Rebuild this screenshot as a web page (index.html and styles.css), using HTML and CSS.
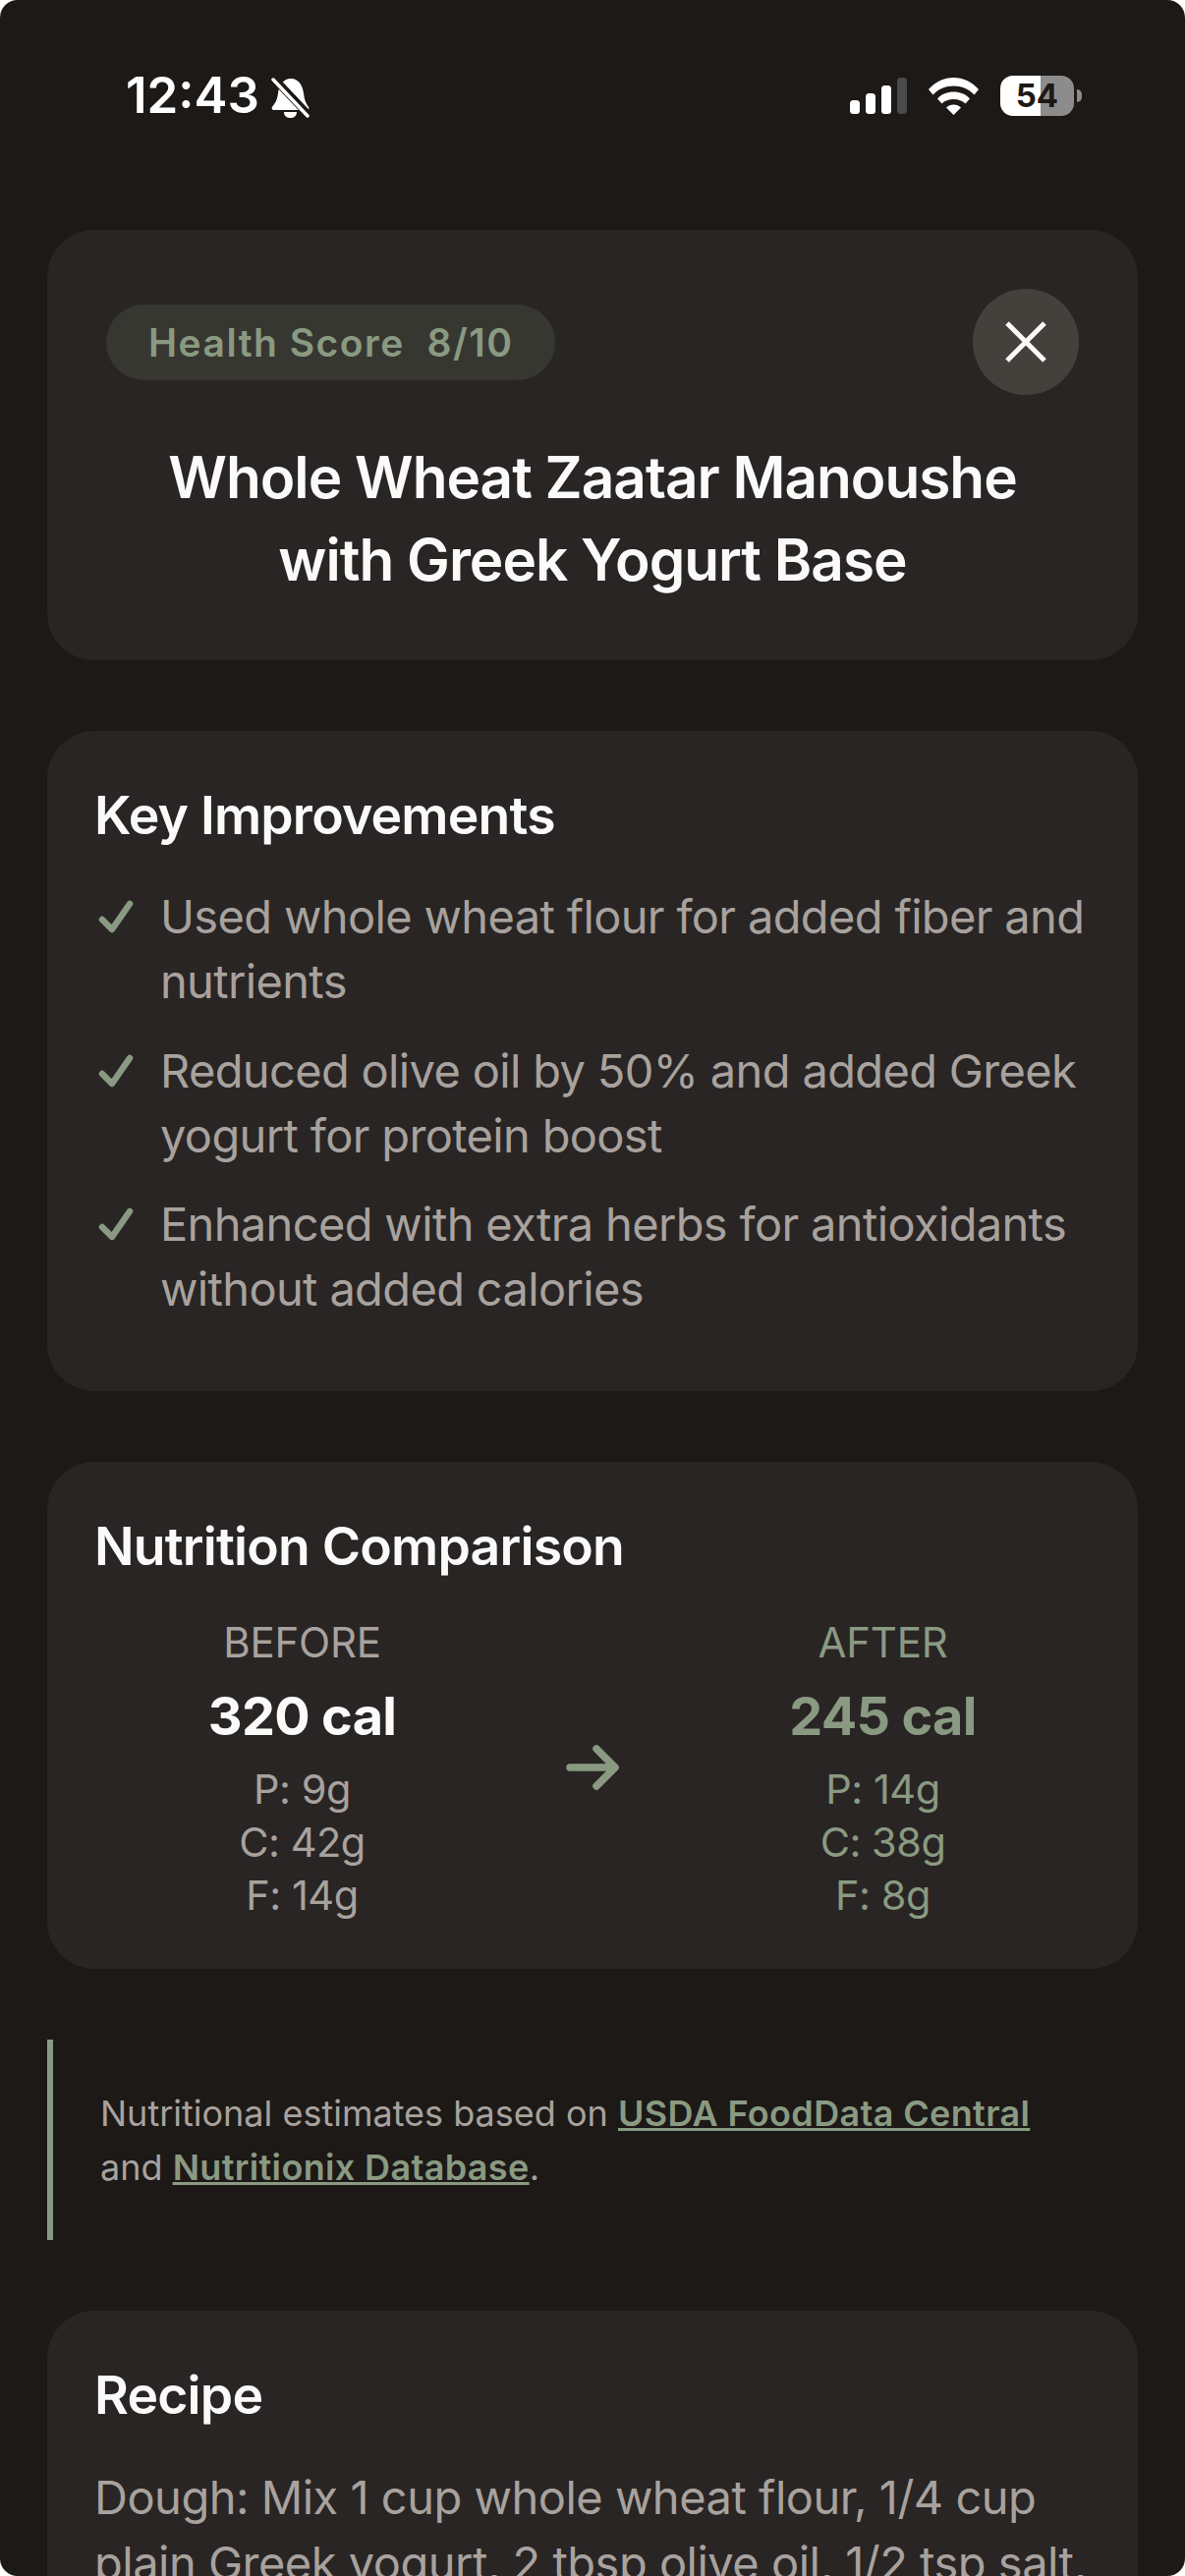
FILE: index.html
```html
<!DOCTYPE html>
<html lang="en">
<head>
    <meta charset="utf-8" />
    <title>Whole Wheat Zaatar Manoushe</title>
    <link rel="stylesheet" href="styles.css">
</head>
<body>
    <div class="screen">
        <div class="status">
            <div class="status-left">
                <span class="time">12:43</span>
                <svg class="bell" width="39" height="42" viewBox="0 0 39 42">
                    <path fill="#fff" d="M20 1C28 1 32 8 33 16C34 24 36 27 38 30C39 32 38 33 36 33H3C1 33 0 32 1 30C3 27 6 24 7 16C8 8 12 1 20 1Z" />
                    <path fill="#fff" d="M13 35H26C26 39 23 41 19.500 41C16 41 13 39 13 35Z" />
                    <path stroke="#1c1917" stroke-width="8" d="M1 -1L39 39" />
                    <path stroke="#fff" stroke-width="3.500" stroke-linecap="round" d="M2 2L37 39" />
                </svg>
            </div>
            <div class="status-right">
                <svg width="58" height="37" viewBox="0 0 58 37">
                    <rect x="0" y="23" width="10" height="14" rx="3.500" fill="#fff" />
                    <rect x="16" y="16" width="10" height="21" rx="3.500" fill="#fff" />
                    <rect x="32" y="8" width="10" height="29" rx="3.500" fill="#fff" />
                    <rect x="48" y="0" width="10" height="37" rx="3.500" fill="#4a4a4a" />
                </svg>
                <svg class="wifi" width="51" height="38" viewBox="0 0 51 38">
                    <path fill="#fff" d="M0 12C7 4 16 0 25.500 0C35 0 44 4 51 12L46.500 17.500C41 11.500 33.500 8.500 25.500 8.500C17.500 8.500 10 11.500 4.500 17.500Z" />
                    <path fill="#fff" d="M9 21.500C13.500 16.500 19 14.500 25.500 14.500C32 14.500 37.500 16.500 42 21.500L37.500 26.500C34.500 23.500 30.500 22 25.500 22C20.500 22 16.500 23.500 13.500 26.500Z" />
                    <path fill="#fff" d="M18 30.500C20 28.500 22.500 27.500 25.500 27.500C28.500 27.500 31 28.500 33 30.500L25.500 38Z" />
                </svg>
                <div class="battery">54</div>
            </div>
        </div>

        <div class="content">
            <div class="card head-card">
                <div class="head-row">
                    <div class="pill">Health Score&nbsp;&nbsp;8/10</div>
                    <div class="close">
                        <svg width="42" height="42" viewBox="0 0 42 42">
                            <path stroke="#fafaf9" stroke-width="5" d="M2 2L40 40M40 2L2 40" />
                        </svg>
                    </div>
                </div>
                <h1 class="title">Whole Wheat Zaatar Manoushe<br>with Greek Yogurt Base</h1>
            </div>

            <div class="card">
                <h2>Key Improvements</h2>
                <ul class="improve">
                    <li>
                        <svg class="check" width="42" height="42" viewBox="0 0 42 42">
                            <path fill="none" stroke="#8a9a82" stroke-width="6.500" stroke-linecap="round" stroke-linejoin="round" d="M8 24L18 34L36 8" />
                        </svg>
                        <span>Used whole wheat flour for added fiber and nutrients</span>
                    </li>
                    <li>
                        <svg class="check" width="42" height="42" viewBox="0 0 42 42">
                            <path fill="none" stroke="#8a9a82" stroke-width="6.500" stroke-linecap="round" stroke-linejoin="round" d="M8 24L18 34L36 8" />
                        </svg>
                        <span>Reduced olive oil by 50% and added Greek yogurt for protein boost</span>
                    </li>
                    <li>
                        <svg class="check" width="42" height="42" viewBox="0 0 42 42">
                            <path fill="none" stroke="#8a9a82" stroke-width="6.500" stroke-linecap="round" stroke-linejoin="round" d="M8 24L18 34L36 8" />
                        </svg>
                        <span>Enhanced with extra herbs for antioxidants without added calories</span>
                    </li>
                </ul>
            </div>

            <div class="card">
                <h2>Nutrition Comparison</h2>
                <div class="compare">
                    <div class="col">
                        <div class="label">BEFORE</div>
                        <div class="cal">320 cal</div>
                        <div class="macros">P: 9g<br>C: 42g<br>F: 14g</div>
                    </div>
                    <svg width="72" height="72" viewBox="0 0 72 72">
                        <path fill="none" stroke="#8a9a82" stroke-width="7.500" stroke-linecap="round" stroke-linejoin="round" d="M13 36H59M40 17L59 36L40 55" />
                    </svg>
                    <div class="col after">
                        <div class="label">AFTER</div>
                        <div class="cal">245 cal</div>
                        <div class="macros">P: 14g<br>C: 38g<br>F: 8g</div>
                    </div>
                </div>
            </div>

            <p class="note">Nutritional estimates based on <a href="#">USDA FoodData Central</a> and <a href="#">Nutritionix Database</a>.</p>

            <div class="card">
                <h2>Recipe</h2>
                <p class="recipe">Dough: Mix 1 cup whole wheat flour, 1/4 cup plain Greek yogurt, 2 tbsp olive oil, 1/2 tsp salt, and warm water until a soft dough forms.</p>
            </div>
        </div>
    </div>
</body>
</html>
```
FILE: styles.css
```css
* {
    box-sizing: border-box;
}

body {
    margin: 0;
    background-color: #fff;
    font-family: "Inter", "Liberation Sans", sans-serif;
}

.screen {
    width: 1206px;
    height: 2622px;
    overflow: hidden;
    background-color: #1c1917;
    border-radius: 18px;
}

.status {
    height: 234px;
    padding: 71px 113px 0 128px;
    display: flex;
    justify-content: space-between;
    align-items: flex-start;
    color: #fff;
}

.status-left {
    display: flex;
    align-items: center;
    gap: 12px;
}

.time {
    font-size: 51px;
    line-height: 52px;
    font-weight: 600;
}

.bell {
    margin-top: 5px;
}

.status-right {
    display: flex;
    align-items: center;
    gap: 22px;
    padding-top: 6px;
}

.battery {
    position: relative;
    width: 75px;
    height: 41px;
    border-radius: 13px;
    background: linear-gradient(to right, #fff 41px, #8c8c8c 41px);
    color: #1c1917;
    font-size: 33px;
    font-weight: 700;
    line-height: 41px;
    text-align: center;
}

.battery::after {
    content: "";
    position: absolute;
    left: 78px;
    top: 14px;
    width: 5px;
    height: 13px;
    border-radius: 0 6px 6px 0;
    background-color: #8c8c8c;
}

.content {
    padding: 0 48px;
}

.card {
    background-color: #292524;
    border-radius: 48px;
    padding: 48px;
    margin-bottom: 72px;
}

.head-card {
    padding: 60px;
}

.head-row {
    display: flex;
    justify-content: space-between;
    align-items: center;
}

.pill {
    height: 77px;
    padding: 0 43px;
    border-radius: 39px;
    background-color: #373731;
    color: #8a9a82;
    font-size: 39px;
    font-weight: 600;
    line-height: 77px;
    letter-spacing: 1.500px;
}

.close {
    width: 108px;
    height: 108px;
    border-radius: 50%;
    background-color: #44403c;
    display: flex;
    align-items: center;
    justify-content: center;
}

.title {
    margin: 42px 0 0;
    color: #fafaf9;
    font-size: 58.500px;
    font-weight: 600;
    line-height: 84px;
    letter-spacing: -1px;
    text-align: center;
}

h2 {
    margin: 0;
    color: #fafaf9;
    font-size: 53.500px;
    font-weight: 600;
    line-height: 76px;
    letter-spacing: -0.800px;
}

.improve {
    list-style: none;
    margin: 32px 0 -1.500px;
    padding: 0;
}

.improve li {
    display: flex;
    gap: 25px;
    margin-bottom: 24px;
    color: #a8a29e;
    font-size: 47px;
    line-height: 66.250px;
    letter-spacing: -0.650px;
}

.check {
    flex-shrink: 0;
    margin-top: 12px;
}

.compare {
    display: grid;
    grid-template-columns: 1fr 72px 1fr;
    gap: 48px;
    align-items: center;
    margin-top: 30px;
    text-align: center;
}

.label {
    color: #a8a29e;
    font-size: 42px;
    line-height: 59px;
    letter-spacing: -0.200px;
}

.cal {
    margin-top: 8px;
    color: #fafaf9;
    font-size: 54px;
    font-weight: 700;
    line-height: 76px;
    letter-spacing: -0.700px;
}

.macros {
    margin-top: 9px;
    color: #a8a29e;
    font-size: 41.500px;
    line-height: 54px;
    letter-spacing: -0.500px;
}

.after .label,
.after .cal,
.after .macros {
    color: #8a9a82;
}

.note {
    margin: 0 0 72px;
    height: 204px;
    padding: 48px;
    border-left: 6px solid #8a9a82;
    color: #a8a29e;
    font-size: 36px;
    line-height: 55px;
}

.note a {
    color: #8a9a82;
    font-weight: 600;
    letter-spacing: 0.350px;
}

.recipe {
    margin: 32px 0 0;
    color: #a8a29e;
    font-size: 47px;
    line-height: 67px;
    letter-spacing: -0.500px;
}
```
